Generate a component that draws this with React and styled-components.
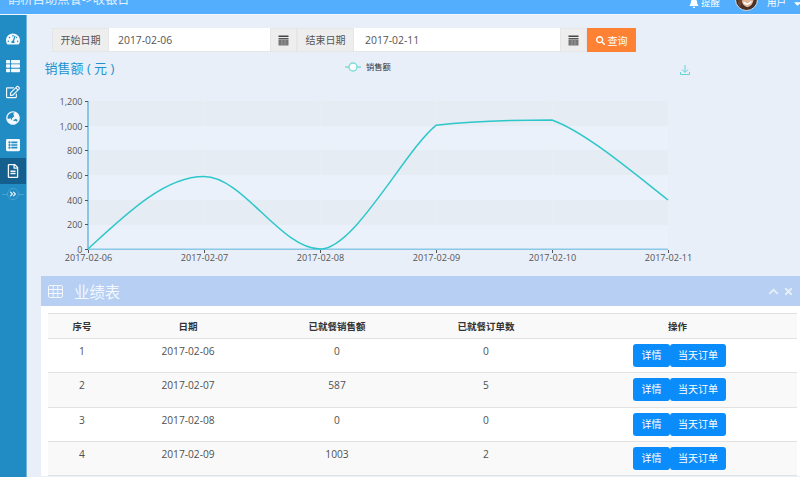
import React from "react";
import styled, { createGlobalStyle } from "styled-components";
import { FaTachometerAlt, FaThList, FaRegEdit, FaGlobeAsia, FaListAlt, FaRegFileAlt, FaAngleDoubleRight, FaBell, FaCaretDown, FaSearch, FaChevronUp, FaTimes } from "react-icons/fa";

const GlobalStyle = createGlobalStyle`
  html, body {
    margin: 0;
    height: 100%;
    overflow: hidden;
    background: #e8eff9;
    font-family: "Open Sans", "Noto Sans CJK SC", sans-serif;
    font-size: 12px;
    color: #555;
  }
`;

const Page = styled.div`
  width: 800px;
  height: 477px;
  overflow: hidden;
  display: flex;
  flex-direction: column;
`;

const Header = styled.div`
  height: 14px;
  flex: none;
  background: #54aefe;
  border-bottom: 1px solid #f4f8fd;
  display: flex;
  align-items: flex-end;
  justify-content: space-between;
  color: #fff;
  overflow: hidden;
`;

const Title = styled.div`
  font-size: 12.3px;
  line-height: 20px;
  margin: 0 0 4px 8px;
  color: #e4f2ff;
`;

const UserBox = styled.div`
  display: flex;
  align-items: flex-end;
  font-size: 9.5px;
  line-height: 16px;
`;

const Remind = styled.span`
  display: flex;
  align-items: center;
  gap: 2px;
  margin: 0 15px 3px 0;
  svg {
    font-size: 10px;
  }
`;

const Avatar = styled.svg`
  width: 23px;
  height: 23px;
  margin: 0 9px 3px 0;
`;

const UserName = styled.span`
  display: flex;
  align-items: center;
  gap: 6px;
  margin-bottom: 3px;
  svg {
    font-size: 11px;
    margin-right: -3px;
  }
`;

const Main = styled.div`
  flex: 1;
  display: flex;
  min-height: 0;
`;

const Sidebar = styled.div`
  width: 26px;
  flex: none;
  background: #218bc3;
  border-right: 1px solid #70b4dc;
  padding-top: 11px;
  display: flex;
  flex-direction: column;
  align-items: stretch;
`;

const NavItem = styled.div`
  height: 26.4px;
  display: flex;
  align-items: center;
  justify-content: center;
  color: #f2f8fc;
  font-size: 14px;
  background: ${(p) => (p.$active ? "#155f8f" : "transparent")};
`;

const Collapse = styled.div`
  height: 14px;
  margin-top: 3px;
  display: flex;
  align-items: center;
  justify-content: center;
  position: relative;
  color: #dcedf8;
  font-size: 8px;
  &::before {
    content: "";
    position: absolute;
    left: 2px;
    right: 2px;
    top: 7px;
    border-top: 1px solid #4ba2d1;
  }
  span {
    position: relative;
    width: 12px;
    height: 12px;
    border-radius: 50%;
    border: 1px solid #4ba2d1;
    background: #218bc3;
    display: flex;
    align-items: center;
    justify-content: center;
    box-sizing: border-box;
  }
`;

const Content = styled.div`
  flex: 1;
  min-width: 0;
  padding-top: 13px;
`;

const FilterBar = styled.div`
  display: flex;
  margin-left: 25px;
  height: 24px;
`;

const AddOn = styled.div`
  background: #eeeeee;
  border: 1px solid #e4e6ea;
  box-sizing: border-box;
  color: #555;
  font-size: 10px;
  line-height: 22px;
  text-align: center;
  width: ${(p) => p.$w}px;
`;

const DateInput = styled.div`
  background: #fff;
  box-sizing: border-box;
  border-bottom: 1px solid #e4e6ea;
  width: ${(p) => p.$w}px;
  padding-left: ${(p) => p.$pl}px;
  font-size: 10.4px;
  line-height: 24px;
  color: #555;
`;

const CalendarBtn = styled.div`
  width: 27px;
  background: #eeeeee;
  border: 1px solid #e4e6ea;
  box-sizing: border-box;
  display: flex;
  align-items: center;
  justify-content: center;
`;

const SearchBtn = styled.div`
  width: 49px;
  background: #ff8234;
  color: #fff;
  font-size: 10px;
  display: flex;
  align-items: center;
  justify-content: center;
  gap: 3px;
  svg {
    font-size: 9px;
  }
`;

const ChartWrap = styled.div`
  height: 224px;
  overflow: hidden;
`;

const ChartSvg = styled.svg`
  display: block;
`;

const Panel = styled.div`
  margin-left: 14px;
  background: #fff;
`;

const PanelHead = styled.div`
  height: 30px;
  background: #b6cff2;
  display: flex;
  align-items: center;
  color: #f4f8fe;
  font-size: 15.4px;
  padding: 0 6px 0 7px;
`;

const PanelIcon = styled.svg`
  width: 15px;
  height: 13px;
  margin-right: 11px;
`;

const PanelTitle = styled.span`
  flex: 1;
`;

const PanelTool = styled.span`
  display: flex;
  font-size: 11px;
  margin-left: 4px;
  color: #e8eff9;
`;

const PanelBody = styled.div`
  padding: 7px 3px 0 7px;
`;

const Table = styled.table`
  width: 749px;
  table-layout: fixed;
  border-collapse: collapse;
  font-size: 10.2px;
  color: #505050;
  text-align: center;
`;

const HeadCell = styled.th`
  height: 24px;
  padding: 0;
  background: #f9f9f9;
  color: #333;
  font-size: 9.5px;
  font-weight: 700;
  border-top: 1px solid #e2e2e2;
  border-bottom: 1px solid #e2e2e2;
  width: ${(p) => p.$w}px;
`;

const Row = styled.tr`
  background: ${(p) => (p.$odd ? "#f9f9f9" : "#fff")};
`;

const Cell = styled.td`
  height: 34.3px;
  padding: 4px 0 0;
  box-sizing: border-box;
  vertical-align: top;
  line-height: 16px;
  border-bottom: 1px solid #e2e2e2;
`;

const ActionCell = styled(Cell)`
  padding-top: 5px;
`;

const BtnGroup = styled.div`
  display: inline-flex;
  margin-left: 4px;
`;

const ActionBtn = styled.span`
  height: 23px;
  box-sizing: border-box;
  background: #0a8cfa;
  color: #fff;
  border-radius: 3px;
  font-size: 10px;
  line-height: 23px;
  width: ${(p) => p.$w}px;
  display: block;
`;

const points = "M88,249 C127,213 165,176.6 204,176.6 C243,176.6 281,249 320,249 C355,249 405,150 436,125.3 C475,121 513,120 552,120 C585,132 630,170 668,200";
const rows = [
  ["1", "2017-02-06", "0", "0"],
  ["2", "2017-02-07", "587", "5"],
  ["3", "2017-02-08", "0", "0"],
  ["4", "2017-02-09", "1003", "2"],
];
const columns = [
  ["序号", 68],
  ["日期", 144],
  ["已就餐销售额", 154],
  ["已就餐订单数", 144],
  ["操作", 239],
];
const bands = [101, 150, 200];
const yTicks = [
  ["1,200", 101],
  ["1,000", 126],
  ["800", 150],
  ["600", 175],
  ["400", 200],
  ["200", 224],
  ["0", 249],
];
const xTicks = [
  ["2017-02-06", 88],
  ["2017-02-07", 204],
  ["2017-02-08", 320],
  ["2017-02-09", 436],
  ["2017-02-10", 552],
  ["2017-02-11", 668],
];

const CalendarIcon = () => (
  <svg width="11" height="11" viewBox="0 0 11 11">
    <rect x="0.5" y="0.5" width="10" height="1.5" fill="#444" />
    <rect x="0.5" y="3" width="10" height="1.5" fill="#555" />
    <rect x="0.5" y="5" width="10" height="5.5" fill="#777" />
    <path d="M4,5 V10.5 M7,5 V10.5" stroke="#aaa" strokeWidth="0.7" />
  </svg>
);

// chart coordinates follow the page, shifted by where the svg starts
const SalesChart = () => (
  <ChartSvg width="773" height="224" viewBox="27 52 773 224" fontFamily="'Open Sans', 'Noto Sans CJK SC', sans-serif">
    <text x="44.5" y="73" fontSize="13" fill="#2092d0">销售额 ( 元 )</text>
    <path d="M345,67 H361" stroke="#7fdcd8" strokeWidth="1.5" />
    <circle cx="353" cy="67" r="4" fill="#fff" stroke="#7fdcd8" strokeWidth="1.5" />
    <text x="366" y="70" fontSize="8.3" fill="#333">销售额</text>
    <path d="M685,65 V72 M682,69.5 L685,72.5 L688,69.5 M680.5,72 V74.5 H689.5 V72" fill="none" stroke="#66d3d6" strokeWidth="1" />
    <rect x="88" y="101" width="580" height="148" fill="#ebf1fa" />
    {bands.map((y) => (
      <rect key={y} x="88" y={y} width="580" height="25" fill="#e6ecf4" />
    ))}
    {xTicks.slice(1, 5).map(([, x]) => (
      <path key={x} d={`M${x},101 V249`} stroke="#eff2f6" strokeOpacity="0.6" strokeWidth="1" />
    ))}
    <path d="M88,101 V249" stroke="#6ab8e0" strokeWidth="1.5" />
    <path d="M88,249.3 H668" stroke="#8ac8e6" strokeWidth="1.6" />
    {yTicks.map(([label, y]) => (
      <g key={label}>
        <path d={`M85,${y + 0.5} H88`} stroke="#555" strokeWidth="1" />
        <text x="82.5" y={y + 3.5} fontSize="9" fill="#555" textAnchor="end">{label}</text>
      </g>
    ))}
    {xTicks.map(([label, x]) => (
      <g key={label}>
        <path d={`M${x + 0.5},250 V253`} stroke="#555" strokeWidth="1" />
        <text x={x + 0.5} y="261" fontSize="9.1" fill="#555" textAnchor="middle">{label}</text>
      </g>
    ))}
    <path d={points} fill="none" stroke="#2ec7c9" strokeWidth="1.5" />
  </ChartSvg>
);

const App = () => (
  <Page>
    <GlobalStyle />
    <Header>
      <Title>鹊桥自助点餐-&gt;收银台</Title>
      <UserBox>
        <Remind>
          <FaBell />
          提醒
        </Remind>
        <Avatar viewBox="0 0 24 24">
          <circle cx="12" cy="12" r="11.5" fill="#4a2f24" stroke="#cfe4f7" />
          <ellipse cx="13" cy="10" rx="6.5" ry="10" fill="#e2b79c" />
          <path d="M3,16 Q5,6 9,2 L7,16 Q6,21 4,19 Z" fill="#6b4433" />
          <path d="M9,15 Q13,19 17,14" fill="none" stroke="#fff" strokeWidth="1.6" />
        </Avatar>
        <UserName>
          用户
          <FaCaretDown />
        </UserName>
      </UserBox>
    </Header>
    <Main>
      <Sidebar>
        <NavItem><FaTachometerAlt /></NavItem>
        <NavItem><FaThList /></NavItem>
        <NavItem><FaRegEdit /></NavItem>
        <NavItem><FaGlobeAsia /></NavItem>
        <NavItem><FaListAlt /></NavItem>
        <NavItem $active><FaRegFileAlt /></NavItem>
        <Collapse><span><FaAngleDoubleRight /></span></Collapse>
      </Sidebar>
      <Content>
        <FilterBar>
          <AddOn $w={57}>开始日期</AddOn>
          <DateInput $w={161} $pl={9}>2017-02-06</DateInput>
          <CalendarBtn><CalendarIcon /></CalendarBtn>
          <AddOn $w={57}>结束日期</AddOn>
          <DateInput $w={206} $pl={11}>2017-02-11</DateInput>
          <CalendarBtn><CalendarIcon /></CalendarBtn>
          <SearchBtn><FaSearch />查询</SearchBtn>
        </FilterBar>
        <ChartWrap>
          <SalesChart />
        </ChartWrap>
        <Panel>
          <PanelHead>
            <PanelIcon viewBox="0 0 15 13">
              <rect x="0.5" y="0.5" width="14" height="12" rx="1.5" fill="none" stroke="#f4f8fe" />
              <path d="M0.5,4.5 H14.5 M0.5,8.5 H14.5 M5.2,0.5 V12.5 M9.8,0.5 V12.5" stroke="#f4f8fe" />
            </PanelIcon>
            <PanelTitle>业绩表</PanelTitle>
            <PanelTool><FaChevronUp /></PanelTool>
            <PanelTool><FaTimes /></PanelTool>
          </PanelHead>
          <PanelBody>
            <Table>
              <thead>
                <tr>
                  {columns.map(([label, w]) => (
                    <HeadCell key={label} $w={w}>{label}</HeadCell>
                  ))}
                </tr>
              </thead>
              <tbody>
                {rows.map((r, i) => (
                  <Row key={r[0]} $odd={i % 2 === 1}>
                    {r.map((v, j) => (
                      <Cell key={j}>{v}</Cell>
                    ))}
                    <ActionCell>
                      <BtnGroup>
                        <ActionBtn $w={37}>详情</ActionBtn>
                        <ActionBtn $w={56}>当天订单</ActionBtn>
                      </BtnGroup>
                    </ActionCell>
                  </Row>
                ))}
              </tbody>
            </Table>
          </PanelBody>
        </Panel>
      </Content>
    </Main>
  </Page>
);

export default App;
